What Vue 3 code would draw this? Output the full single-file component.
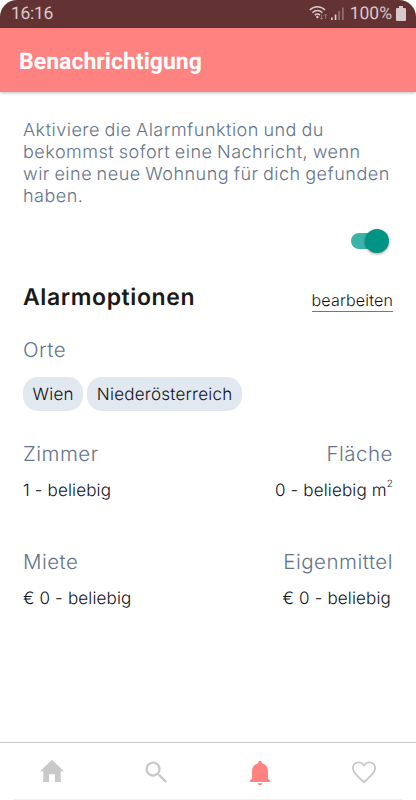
<template>
  <div class="screen">
    <div class="status-bar">
      <span class="time">{{ time }}</span>
      <div class="status-icons">
        <svg class="wifi" width="20" height="16" viewBox="0 0 20 16" fill="none">
          <g stroke="#d9c9c9" stroke-width="1.500">
            <path d="M.8 5.100C5 .7 11.800 .7 16 5.100" />
            <path d="M3.400 7.700C6.300 4.800 10.500 4.800 13.400 7.700" />
            <path d="M5.800 10.100C7.400 8.500 9.400 8.500 11 10.100" />
          </g>
          <circle cx="8.400" cy="12" r="1.200" fill="#d9c9c9" />
          <path d="M12.500 9.500v5M10.900 12.800l1.600 1.700 1.600-1.700M16.500 14v-5M14.900 10.700l1.600-1.700 1.600 1.700" stroke="#937272" stroke-width="1" />
        </svg>
        <svg class="signal" width="13" height="14" viewBox="0 0 13 14">
          <path d="M0 10.500h1.700V13H0zM3.700 7.400h1.700V13h-1.700z" fill="#d9c9c9" />
          <path d="M7.300 4H9v9H7.300zM11 .6h1.700V13H11z" fill="#937272" />
        </svg>
        <span class="percent">{{ battery }}%</span>
        <svg class="battery" width="10" height="15" viewBox="0 0 10 15">
          <path d="M3 0h4v2h2q1 0 1 1v11q0 1-1 1H1q-1 0-1-1V3q0-1 1-1h2z" fill="#d9c9c9" />
        </svg>
      </div>
    </div>

    <header class="header">
      <h1>Benachrichtigung</h1>
    </header>

    <main class="content">
      <p class="intro">
        Aktiviere die Alarmfunktion und du<br />
        bekommst sofort eine Nachricht, wenn<br />
        wir eine neue Wohnung für dich gefunden<br />
        haben.
      </p>

      <div class="switch-row">
        <button
          class="switch"
          :class="{ on: alarm }"
          role="switch"
          :aria-checked="alarm"
          @click="alarm = !alarm"
        >
          <span class="thumb"></span>
        </button>
      </div>

      <div class="options-head">
        <h2>Alarmoptionen</h2>
        <a class="edit">bearbeiten</a>
      </div>

      <h3 class="label">Orte</h3>
      <div class="chips">
        <span v-for="place in places" :key="place" class="chip">{{ place }}</span>
      </div>

      <div v-for="(row, i) in rows" :key="i" class="row">
        <div v-for="item in row" :key="item.label" class="field">
          <h3 class="label">{{ item.label }}</h3>
          <p class="value" :class="{ money: item.money }">{{ item.value }}<sup v-if="item.sup">{{ item.sup }}</sup></p>
        </div>
      </div>
    </main>

    <nav class="tabs">
      <button
        v-for="tab in tabs"
        :key="tab.name"
        class="tab"
        :class="{ active: tab.name === current }"
        @click="current = tab.name"
      >
        <svg width="28" height="28" viewBox="0 0 24 24" fill="currentColor">
          <path :d="tab.icon" />
        </svg>
      </button>
    </nav>
  </div>
</template>

<script setup>
import { ref } from 'vue';

const time = ref('16:16');
const battery = ref(100);
const alarm = ref(true);
const current = ref('alarm');

const places = ['Wien', 'Niederösterreich'];

const rows = [
  [
    { label: 'Zimmer', value: '1 - beliebig' },
    { label: 'Fläche', value: '0 - beliebig m', sup: '2' },
  ],
  [
    { label: 'Miete', value: '€ 0 - beliebig' },
    { label: 'Eigenmittel', value: '€ 0 - beliebig', money: true },
  ],
];

const tabs = [
  { name: 'home', icon: 'M4.500 20.500v-9.200H1.700L12 1.500l10.300 9.800h-2.800v9.200h-5V14h-5v6.500z' },
  {
    name: 'search',
    icon: 'M15.500 14h-.790l-.280-.270C15.410 12.590 16 11.110 16 9.500 16 5.910 13.090 3 9.500 3S3 5.910 3 9.500 5.910 16 9.500 16c1.610 0 3.090-.590 4.230-1.570l.270.280v.790l6 5.990L21.490 20l-5.990-6zm-6 0C7.010 14 5 11.990 5 9.500S7.010 5 9.500 5 14 7.010 14 9.500 11.990 14 9.500 14z',
  },
  {
    name: 'alarm',
    icon: 'M9.800 21.700h4.400c-.2 1-.9 1.500-2.200 1.500s-2-.5-2.200-1.500zM18.800 17.600V11c0-3.400-2-5.600-5.200-6.500 0-1.300-.5-2.200-1.600-2.200s-1.600.9-1.600 2.200C7.200 5.400 5.200 7.600 5.200 11v6.600l-1.900 2v1h17.400v-1z',
  },
  {
    name: 'favorites',
    icon: 'M16.500 3c-1.740 0-3.410.810-4.500 2.090C10.910 3.810 9.240 3 7.500 3 4.200 3 1.700 5.420 1.700 8.500c0 3.980 3.700 7.060 8.850 12.040L12 21.950l1.450-1.410C18.600 15.560 22.300 12.480 22.300 8.500 22.300 5.420 19.800 3 16.500 3zm-4.400 16.550l-.1.100-.1-.1C6.940 14.840 3.300 11.790 3.300 8.500 3.300 6.200 5.200 4.500 7.500 4.500c1.600 0 3.200 1 3.770 2.500h1.460c.57-1.500 2.170-2.500 3.770-2.500 2.300 0 4.200 1.700 4.200 4 0 3.290-3.640 6.340-8.600 11.050z',
  },
];
</script>

<style>
body {
  background: #ffffff;
}
</style>

<style scoped>
.screen {
  display: flex;
  flex-direction: column;
  height: 800px;
  overflow: hidden;
  background: #ffffff;
  font-family: Inter, 'Liberation Sans', sans-serif;
  font-weight: 350;
  color: #101018;
  text-rendering: geometricPrecision;
}

h1,
h2,
h3,
p {
  margin: 0;
}

button {
  padding: 0;
  border: 0;
  background: none;
}

.status-bar {
  display: flex;
  flex: none;
  justify-content: space-between;
  height: 28px;
  padding: 0 10px 0 11px;
  box-sizing: border-box;
  border-radius: 17px 17px 0 0;
  background: #633333;
  color: #d9c9c9;
  font: 17.5px/28px Roboto, sans-serif;
}

.time {
  letter-spacing: -0.3px;
}

.status-icons {
  display: flex;
}

.wifi {
  margin-top: 5px;
}

.signal {
  margin: 7px 6px 0 2px;
}

.battery {
  margin: 6px 0 0 4px;
}

.header {
  position: relative;
  display: flex;
  flex: none;
  align-items: center;
  height: 64px;
  padding: 3px 19px 0;
  box-sizing: border-box;
  background: #fd8280;
  box-shadow: 0 1px 3px rgba(0, 0, 0, 0.25);
}

.header h1 {
  color: #ffffff;
  font: bold 23px/28px Roboto, sans-serif;
  letter-spacing: 0.03px;
}

.content {
  flex: 1;
  padding: 28px 23px 0 23px;
}

.intro {
  color: #64748b;
  font-size: 18px;
  line-height: 22px;
  letter-spacing: 0.5px;
  word-spacing: -1px;
  white-space: nowrap;
}

.switch-row {
  display: flex;
  justify-content: flex-end;
  margin-top: 21px;
  padding-right: 4px;
}

.switch {
  display: flex;
  align-items: center;
  width: 38px;
  height: 24px;
}

.switch::before {
  content: '';
  width: 34px;
  height: 16px;
  margin-right: -20px;
  border-radius: 8px;
  background: #c4c4c4;
}

.switch.on::before {
  background: #3ab3aa;
}

.thumb {
  position: relative;
  width: 24px;
  height: 24px;
  flex: none;
  border-radius: 50%;
  background: #009485;
  box-shadow: 0 1px 3px rgba(0, 0, 0, 0.4);
}

.options-head {
  display: flex;
  justify-content: space-between;
  margin-top: 29px;
}

.options-head h2 {
  color: #1a1a1a;
  font-size: 23px;
  font-weight: 600;
  line-height: 30px;
  letter-spacing: 0.6px;
}

.edit {
  height: 20px;
  margin-top: 9px;
  border-bottom: 1px solid #777777;
  font-size: 16px;
  line-height: 19px;
  letter-spacing: 0.17px;
}

.label {
  color: #64748b;
  font-size: 20.5px;
  font-weight: 300;
  line-height: 26px;
  letter-spacing: 0.5px;
}

.options-head + .label {
  margin-top: 25px;
}

.chips {
  display: flex;
  gap: 4px;
  margin-top: 14px;
}

.chip {
  padding: 2px 9.5px 0;
  border-radius: 15px;
  background: #e2e8f0;
  font-size: 17px;
  line-height: 32px;
  letter-spacing: 0.25px;
}

.row {
  display: flex;
  justify-content: space-between;
  height: 108px;
}

.chips + .row {
  margin-top: 30px;
}

.field:last-child {
  text-align: right;
}

.value {
  margin-top: 11px;
  font-size: 17px;
  line-height: 26px;
  letter-spacing: 0.15px;
}

.value.money {
  padding-right: 2px;
}

.value sup {
  font-size: 10px;
  line-height: 0;
  vertical-align: 9px;
}

.tabs {
  display: flex;
  flex: none;
  height: 58px;
  box-sizing: border-box;
  border-top: 1px solid #c8c8c8;
  background: linear-gradient(#f0f0f0, #f0f0f0) center bottom / 388px 1px no-repeat;
}

.tab {
  display: flex;
  flex: 1;
  align-items: center;
  justify-content: center;
  color: #c9c9c9;
}

.tab.active {
  color: #fd8280;
}
</style>
